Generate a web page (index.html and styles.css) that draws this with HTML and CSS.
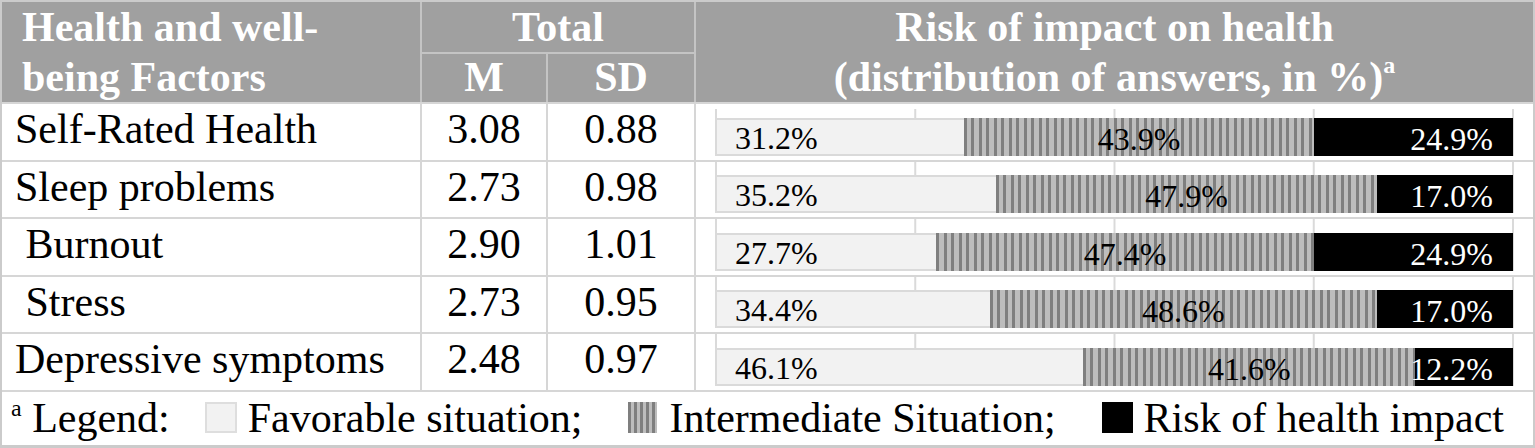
FILE: index.html
```html
<!DOCTYPE html>
<html>
<head>
<meta charset="utf-8">
<link rel="stylesheet" href="styles.css">
</head>
<body>
<div class="frame">
  <div class="head">
    <div class="hc h-name">Health and well-<br>being Factors</div>
    <div class="hc h-total">Total</div>
    <div class="hc h-m">M</div>
    <div class="hc h-sd">SD</div>
    <div class="hc h-chart">Risk of impact on health<br>(distribution of answers, in %)<sup>a</sup></div>
  </div>
  <div class="body">
    <div class="cell name">Self-Rated Health</div>
    <div class="cell num">3.08</div>
    <div class="cell num">0.88</div>
    <div class="cell chart first"><div class="bar">
      <div class="seg fav" style="flex-basis:31.2%">31.2%</div>
      <div class="seg mid" style="flex-basis:43.9%">43.9%</div>
      <div class="seg risk" style="flex-basis:24.9%">24.9%</div>
    </div></div>

    <div class="cell name">Sleep problems</div>
    <div class="cell num">2.73</div>
    <div class="cell num">0.98</div>
    <div class="cell chart"><div class="bar">
      <div class="seg fav" style="flex-basis:35.2%">35.2%</div>
      <div class="seg mid" style="flex-basis:47.9%">47.9%</div>
      <div class="seg risk" style="flex-basis:17.0%">17.0%</div>
    </div></div>

    <div class="cell name">&nbsp;Burnout</div>
    <div class="cell num">2.90</div>
    <div class="cell num">1.01</div>
    <div class="cell chart"><div class="bar">
      <div class="seg fav" style="flex-basis:27.7%">27.7%</div>
      <div class="seg mid" style="flex-basis:47.4%">47.4%</div>
      <div class="seg risk" style="flex-basis:24.9%">24.9%</div>
    </div></div>

    <div class="cell name">&nbsp;Stress</div>
    <div class="cell num">2.73</div>
    <div class="cell num">0.95</div>
    <div class="cell chart"><div class="bar">
      <div class="seg fav" style="flex-basis:34.4%">34.4%</div>
      <div class="seg mid" style="flex-basis:48.6%">48.6%</div>
      <div class="seg risk" style="flex-basis:17.0%">17.0%</div>
    </div></div>

    <div class="cell name">Depressive symptoms</div>
    <div class="cell num">2.48</div>
    <div class="cell num">0.97</div>
    <div class="cell chart"><div class="bar">
      <div class="seg fav" style="flex-basis:46.1%">46.1%</div>
      <div class="seg mid" style="flex-basis:41.6%">41.6%</div>
      <div class="seg risk" style="flex-basis:12.2%">12.2%</div>
    </div></div>

    <div class="cell legend">
      <span class="lg-label"><sup>a</sup> Legend:</span>
      <span class="box box-fav"></span>
      <span class="lg-text">Favorable situation;</span>
      <span class="box box-mid"></span>
      <span class="lg-text">Intermediate Situation;</span>
      <span class="box box-risk"></span>
      <span class="lg-text">Risk of health impact</span>
    </div>
  </div>
</div>
</body>
</html>
```

FILE: styles.css
```css
html, body {
  margin: 0;
  padding: 0;
  background: #ffffff;
}

.frame {
  width: 1535px;
  height: 448px;
  box-sizing: border-box;
  border: 2px solid #cbcbcb;
  border-bottom-width: 3px;
  font-family: "Liberation Serif", "Times New Roman", serif;
  color: #000;
  background: #d6d6d6;
}

/* ---------- header ---------- */
.head {
  display: grid;
  grid-template-columns: 418px 124px 146px 1fr;
  grid-template-rows: 50px 48px;
  gap: 2px;
  background: #c4c4c4;
  height: 100px;
}

.hc {
  background: #a0a0a0;
  color: #ffffff;
  font-weight: bold;
  font-size: 42px;
  line-height: 50px;
  white-space: nowrap;
}

.h-name {
  grid-row: 1 / 3;
  grid-column: 1;
  padding-left: 20px;
}

.h-total {
  grid-row: 1;
  grid-column: 2 / 4;
  text-align: center;
}

.h-m, .h-sd {
  grid-row: 2;
  text-align: center;
  line-height: 46px;
}

.h-m { grid-column: 2; }
.h-sd { grid-column: 3; }

.h-chart {
  grid-row: 1 / 3;
  grid-column: 4;
  text-align: center;
}

.h-chart sup {
  font-size: 24px;
  line-height: 0;
  vertical-align: 18px;
}

/* ---------- body ---------- */
.body {
  display: grid;
  grid-template-columns: 418px 124px 146px 1fr;
  grid-template-rows: 56px 55px 56px 55px 56px 53px;
  gap: 2px;
  margin-top: 2px;
  background: #d6d6d6;
}

.cell {
  background: #ffffff;
  font-size: 42px;
  line-height: 48px;
  white-space: nowrap;
}

.name {
  display: flex;
  align-items: center;
  padding: 0 0 6px 13px;
}

.num {
  display: flex;
  align-items: center;
  justify-content: center;
  padding-bottom: 6px;
}

.chart {
  display: flex;
  align-items: flex-end;
  padding: 0 19px 4px 19px;
  background-color: #ffffff;
  background-image:
    linear-gradient(to right, #dadada 0, #dadada 2px, transparent 2px),
    linear-gradient(#ffffff, #ffffff);
  background-size: 199.25px 100%, 100% 100%;
  background-repeat: repeat-x, no-repeat;
  background-origin: content-box, border-box;
  background-clip: content-box, border-box;
  background-position: 0 0, 0 0;
}

.chart.first {
  background-position: 0 5px, 0 0;
}

.bar {
  display: flex;
  height: 38px;
  width: 798px;
  font-size: 32px;
}

.seg {
  flex-grow: 1;
  flex-shrink: 1;
  min-width: 0;
  box-sizing: border-box;
  white-space: nowrap;
  display: flex;
  align-items: center;
  padding-top: 4px;
  line-height: 34px;
}

.fav {
  background: #f2f2f2;
  border: 2px solid #dadada;
  border-right: none;
  padding-left: 18px;
  padding-top: 2px;
}

.mid {
  background: repeating-linear-gradient(to right, #7f7f7f 0, #7f7f7f 3px, #bdbdbd 3px, #bdbdbd 7.5px);
  justify-content: center;
}

.risk {
  background: #000000;
  color: #ffffff;
  justify-content: flex-end;
  padding-right: 20px;
}

/* ---------- legend ---------- */
.legend {
  grid-column: 1 / 5;
  display: flex;
  align-items: center;
  padding: 0 0 2px 9px;
  line-height: 50px;
}

.lg-label sup {
  font-size: 24px;
  line-height: 0;
  vertical-align: 16px;
}

.box {
  display: inline-block;
  height: 31px;
  box-sizing: border-box;
  flex: none;
}

.box-fav {
  width: 32px;
  background: #f2f2f2;
  border: 2px solid #dedede;
  margin-left: 35px;
  margin-right: 11px;
}

.box-mid {
  width: 29px;
  background: repeating-linear-gradient(to right, #7f7f7f 0, #7f7f7f 3px, #bdbdbd 3px, #bdbdbd 6px);
  margin-left: 45px;
  margin-right: 13px;
}

.box-risk {
  width: 31px;
  background: #000000;
  margin-left: 46px;
  margin-right: 11px;
}
```
